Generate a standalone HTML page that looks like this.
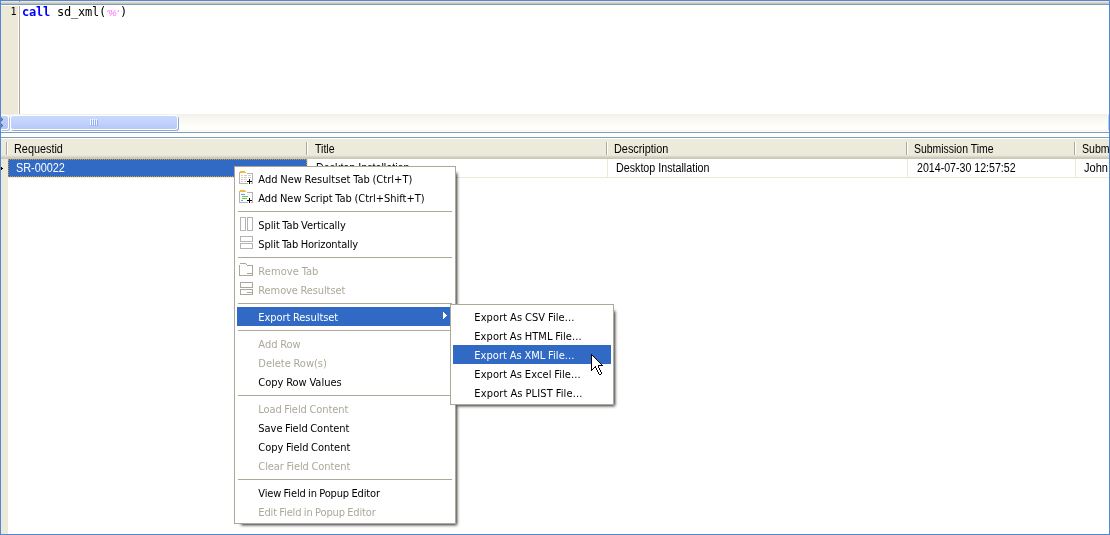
<!DOCTYPE html>
<html><head><meta charset="utf-8">
<style>
html,body{margin:0;padding:0;}
body{width:1110px;height:535px;overflow:hidden;background:#fff;position:relative;font-family:"Liberation Sans",sans-serif;}
.abs{position:absolute;}
#frame{left:0;top:0;width:1108px;height:533px;border:1px solid #4f89d6;pointer-events:none;z-index:50;}
#topbar{left:1px;top:1px;width:1108px;height:3px;background:linear-gradient(#efe7d5 0,#efe7d5 1px,#d8d4c9 1px,#d8d4c9 2px,#c4c3bd 2px);}
#topline{left:1px;top:4px;width:1108px;height:1px;background:#7f9db9;}
#gutter{left:1px;top:6px;width:17px;height:108px;background:#ece9d8;}
#gutline{left:19px;top:6px;width:1px;height:108px;background:#aca899;}
#lnum{left:1px;top:6px;width:15.5px;text-align:right;font:10px/12px "DejaVu Sans Mono","Liberation Mono",monospace;color:#000;}
#code{left:22px;top:5px;font:12px/15px "DejaVu Sans Mono","Liberation Mono",monospace;color:#000;white-space:pre;letter-spacing:-0.22px;}
#code b{color:#0000ff;font-weight:bold;}
#code i{color:#ff66ff;font:italic 9.5px "Liberation Sans",sans-serif;letter-spacing:0;display:inline-block;width:14px;text-align:center;position:relative;top:0;left:-0.5px;}
#sbar{left:1px;top:114px;width:1108px;height:17px;background:linear-gradient(#f1f0e9,#f8f7f2 30%,#fefefb 70%,#fefefb 94%,#eeede0);}
#sbtn{left:1px;top:115px;width:7px;height:13px;border:1px solid #fff;border-left:none;border-radius:0 3px 3px 0;background:linear-gradient(#c1d2fa,#b1c6f6);box-shadow:1px 1px 0 #a9bce6;}
#thumb{left:10px;top:115px;width:166px;height:13px;border:1px solid #fff;border-radius:3px;background:linear-gradient(#c9d8fc,#c2d2fb 50%,#b5c8f7);box-shadow:1px 1px 0 #8da6d6;}
.grip{top:119px;width:1px;height:6px;background:#f4f8ff;box-shadow:1px 1px 0 #8cb0f8;}
#l1{left:1px;top:132px;width:1108px;height:1px;background:#7f9db9;}
#l2{left:1px;top:137px;width:1108px;height:1px;background:#7f9db9;}
#hdr{left:1px;top:139px;width:1108px;height:20px;background:linear-gradient(#ebeadb 0,#ebeadb 16px,#e3e0d0 17px,#d6d2c2 18px,#cbc7b8 19px,#cbc7b8);}
.hsep{top:142px;width:1px;height:13px;background:#aca899;box-shadow:1px 0 0 #fff;}
.ht{top:142px;margin-left:-0.6px;font:12px/14px "Liberation Sans",sans-serif;color:#000;white-space:nowrap;transform-origin:0 0;transform:scaleX(0.88);}
#ind{left:1px;top:159px;width:7px;height:375px;background:#ece9d8;}
#sel{left:8px;top:159px;width:299px;height:18px;background:#316ac5;}
#foc{left:8px;top:159px;width:297px;height:16px;border:1px dotted #ce953a;}
.ct{top:161px;margin-left:-0.6px;font:12px/14px "Liberation Sans",sans-serif;color:#000;white-space:nowrap;transform-origin:0 0;transform:scaleX(0.88);}
.vl{top:159px;width:1px;height:19px;background:#ece9d8;}
#hl{left:8px;top:177px;width:1101px;height:1px;background:#ece9d8;}
.menu{background:#fff;border:1px solid #aca899;box-shadow:4px 4px 3px -3px rgba(0,0,0,.85);box-sizing:border-box;padding:2px;font:11px/19px "DejaVu Sans Condensed","Liberation Sans",sans-serif;color:#000;word-spacing:-0.5px;}
.mi{height:19px;padding-left:21.3px;white-space:nowrap;position:relative;}
.mi span{position:relative;top:1px;}
.mi.d{color:#aca899;}
.mi.h{background:#316ac5;color:#fff;}
.ms{height:8px;position:relative;}
.ms:after{content:"";position:absolute;left:1px;right:1px;top:4px;height:1px;background:#aca899;}
#m1{left:234px;top:166px;width:222px;height:358px;z-index:10;}
#m2{left:450px;top:304px;width:164px;height:101px;z-index:11;}
.ico{position:absolute;left:0;top:1px;}
#cur{left:591px;top:354px;z-index:30;}
</style></head><body><div id="wrap" style="position:absolute;left:0;top:0;width:1110px;height:535px;will-change:transform">
<div class="abs" id="topbar"></div><div class="abs" id="topline"></div>
<div class="abs" id="gutter"></div><div class="abs" id="gutline"></div>
<div class="abs" style="left:19px;top:1px;width:1px;height:1px;background:#8f98a3"></div><div class="abs" id="lnum">1</div>
<div class="abs" id="code"><b>call</b> sd_xml(<i>'%'</i>)</div>
<div class="abs" id="sbar"></div><div class="abs" id="sbtn"></div><div class="abs" id="thumb"></div><svg class="abs" style="left:0;top:117px" width="4" height="11" viewBox="0 0 4 11"><path fill="#4d6185" d="M0 0.500L1.200 0.500L3.200 2.500L1.200 4.500L0 4.500L1.600 2.500zM0 6.500L1.200 6.500L3.200 8.500L1.200 10.500L0 10.500L1.600 8.500z"/></svg>
<div class="abs grip" style="left:90px"></div><div class="abs grip" style="left:92px"></div><div class="abs grip" style="left:94px"></div><div class="abs grip" style="left:96px"></div>
<div class="abs" style="left:1107px;top:115px;width:1px;height:15px;background:#fff;box-shadow:1px 0 0 #b8cbf6"></div><div class="abs" id="l1"></div><div class="abs" id="l2"></div>
<div class="abs" id="hdr"></div>
<div class="abs hsep" style="left:6px"></div><div class="abs hsep" style="left:306px"></div><div class="abs hsep" style="left:606px"></div><div class="abs hsep" style="left:906px"></div><div class="abs hsep" style="left:1074px"></div>
<div class="abs ht" style="left:15px;transform:scaleX(.905)">Requestid</div><div class="abs ht" style="left:315.5px">Title</div><div class="abs ht" style="left:615px;transform:scaleX(.905)">Description</div><div class="abs ht" style="left:915px;transform:scaleX(.87)">Submission Time</div><div class="abs ht" style="left:1083px">Submitter</div>
<div class="abs" id="ind"></div>
<svg class="abs" style="left:0;top:165px" width="4" height="7" viewBox="0 0 4 7" shape-rendering="crispEdges"><path d="M0 1h1v5h-1zM1 2h1v3h-1zM2 3h1v1h-1z" fill="#000"/></svg>
<div class="abs" id="sel"></div><div class="abs" id="foc"></div>
<div class="abs vl" style="left:307px"></div><div class="abs vl" style="left:607px"></div><div class="abs vl" style="left:907px"></div><div class="abs vl" style="left:1075px"></div>
<div class="abs" id="hl"></div>
<div class="abs ct" style="left:17px;color:#fff;transform:scaleX(.905)">SR-00022</div><div class="abs ct" style="left:317px;transform:scaleX(.892)">Desktop Installation</div><div class="abs ct" style="left:617px;transform:scaleX(.892)">Desktop Installation</div><div class="abs ct" style="left:917.5px;transform:scaleX(.885)">2014-07-30 12:57:52</div><div class="abs ct" style="left:1085px;transform:scaleX(.92)">John</div>

<div class="abs menu" id="m1">
<div class="mi"><svg class="ico" width="16" height="16" viewBox="0 0 16 16" shape-rendering="crispEdges"><path fill="#f5b93d" d="M3 1h5v1h-5zM2 2h7v1h-7z"/><path fill="none" stroke="#b4b4b4" d="M2.500 3v10.500h13v-10h-6"/><path fill="#cfcfcf" d="M4 5h2v1h-2zM7 5h3v1h-3zM11 5h3v1h-3zM4 7h2v1h-2zM7 7h3v1h-3zM11 7h3v1h-3zM4 9h2v1h-2zM7 9h3v1h-3zM4 11h2v1h-2zM7 11h2v1h-2z"/><path fill="#fff" d="M9 10h6v3h-6zM11 8h3v7h-3z"/><path fill="#000" d="M10 11h5v1h-5zM12 9h1v5h-1z"/></svg><span style="letter-spacing:0.030px">Add New Resultset Tab (Ctrl+T)</span></div>
<div class="mi"><svg class="ico" width="16" height="16" viewBox="0 0 16 16" shape-rendering="crispEdges"><path fill="#f5b93d" d="M3 1h5v1h-5zM2 2h7v1h-7z"/><path fill="none" stroke="#b4b4b4" d="M2.500 3v10.500h13v-10h-6"/><path fill="#5aa0f5" d="M4 5h4v1h-4zM4 11h2v1h-2z"/><path fill="#5fcf45" d="M5 7h6v1h-6zM5 9h5v1h-5z"/><path fill="#fff" d="M9 10h6v3h-6zM11 8h3v7h-3z"/><path fill="#000" d="M10 11h5v1h-5zM12 9h1v5h-1z"/></svg><span style="letter-spacing:-0.023px">Add New Script Tab (Ctrl+Shift+T)</span></div>
<div class="ms"></div>
<div class="mi"><svg class="ico" width="16" height="16" viewBox="0 0 16 16" shape-rendering="crispEdges"><path fill="none" stroke="#b4b4b4" d="M3.500 1.500h5v13h-5zM10.500 1.500h5v13h-5z"/></svg><span style="letter-spacing:-0.099px">Split Tab Vertically</span></div>
<div class="mi"><svg class="ico" width="16" height="16" viewBox="0 0 16 16" shape-rendering="crispEdges"><path fill="none" stroke="#b4b4b4" d="M3.500 1.500h12v5h-12zM3.500 8.500h12v5h-12z"/></svg><span style="letter-spacing:-0.146px">Split Tab Horizontally</span></div>
<div class="ms"></div>
<div class="mi d"><svg class="ico" width="16" height="16" viewBox="0 0 16 16" shape-rendering="crispEdges"><path fill="none" stroke="#aca899" d="M2.500 13.500v-11M3 1.500h6M9 2.500h1M9.500 3.500h6.500M2 13.500h14M15.500 3.500v10M10 11.500h6"/></svg><span style="letter-spacing:0.085px">Remove Tab</span></div>
<div class="mi d"><svg class="ico" width="16" height="16" viewBox="0 0 16 16" shape-rendering="crispEdges"><path fill="none" stroke="#aca899" d="M3.500 1.500h12v5h-12zM3.500 8.500h12v5h-12zM10 11.500h6"/></svg><span style="letter-spacing:-0.091px">Remove Resultset</span></div>
<div class="ms"></div>
<div class="mi h"><span style="letter-spacing:-0.049px">Export Resultset</span><svg style="position:absolute;left:206px;top:5px" width="4" height="7" viewBox="0 0 4 7" shape-rendering="crispEdges"><path fill="#fff" d="M0 0h1v7h-1zM1 1h1v5h-1zM2 2h1v3h-1zM3 3h1v1h-1z"/></svg></div>
<div class="ms"></div>
<div class="mi d"><span style="letter-spacing:0.015px">Add Row</span></div>
<div class="mi d"><span style="letter-spacing:0.002px">Delete Row(s)</span></div>
<div class="mi"><span style="letter-spacing:0.021px">Copy Row Values</span></div>
<div class="ms"></div>
<div class="mi d"><span style="letter-spacing:-0.062px">Load Field Content</span></div>
<div class="mi"><span style="letter-spacing:-0.036px">Save Field Content</span></div>
<div class="mi"><span style="letter-spacing:-0.030px">Copy Field Content</span></div>
<div class="mi d"><span style="letter-spacing:-0.071px">Clear Field Content</span></div>
<div class="ms"></div>
<div class="mi"><span style="letter-spacing:-0.155px">View Field in Popup Editor</span></div>
<div class="mi d"><span style="letter-spacing:-0.152px">Edit Field in Popup Editor</span></div>
</div>
<div class="abs menu" id="m2">
<div class="mi"><span style="letter-spacing:0.101px">Export As CSV File...</span></div>
<div class="mi"><span style="letter-spacing:0.076px">Export As HTML File...</span></div>
<div class="mi h"><span style="letter-spacing:0.054px">Export As XML File...</span></div>
<div class="mi"><span style="letter-spacing:0.092px">Export As Excel File...</span></div>
<div class="mi"><span style="letter-spacing:0.151px">Export As PLIST File...</span></div>
</div>
<svg class="abs" id="cur" width="12" height="21" viewBox="0 0 12 21" shape-rendering="crispEdges"><path fill="#fff" d="M1 2h1v1h-1zM1 3h2v1h-2zM1 4h3v1h-3zM1 5h4v1h-4zM1 6h5v1h-5zM1 7h6v1h-6zM1 8h7v1h-7zM1 9h8v1h-8zM1 10h9v1h-9zM1 11h6v1h-6zM1 12h3v1h-3zM5 12h2v1h-2zM1 13h2v1h-2zM5 13h2v1h-2zM1 14h1v1h-1zM6 14h2v1h-2zM6 15h2v1h-2zM7 16h2v1h-2zM7 17h2v1h-2zM8 18h2v1h-2zM8 19h2v1h-2z"/><path fill="#000" d="M0 0h1v1h-1zM0 1h2v1h-2zM0 2h1v1h-1zM2 2h1v1h-1zM0 3h1v1h-1zM3 3h1v1h-1zM0 4h1v1h-1zM4 4h1v1h-1zM0 5h1v1h-1zM5 5h1v1h-1zM0 6h1v1h-1zM6 6h1v1h-1zM0 7h1v1h-1zM7 7h1v1h-1zM0 8h1v1h-1zM8 8h1v1h-1zM0 9h1v1h-1zM9 9h1v1h-1zM0 10h1v1h-1zM10 10h1v1h-1zM0 11h1v1h-1zM7 11h5v1h-5zM0 12h1v1h-1zM4 12h1v1h-1zM7 12h1v1h-1zM0 13h1v1h-1zM3 13h2v1h-2zM7 13h1v1h-1zM0 14h1v1h-1zM2 14h1v1h-1zM5 14h1v1h-1zM8 14h1v1h-1zM0 15h2v1h-2zM5 15h1v1h-1zM8 15h1v1h-1zM0 16h1v1h-1zM6 16h1v1h-1zM9 16h1v1h-1zM6 17h1v1h-1zM9 17h1v1h-1zM7 18h1v1h-1zM10 18h1v1h-1zM7 19h1v1h-1zM10 19h1v1h-1zM8 20h2v1h-2z"/></svg>
<div class="abs" id="frame"></div>
</div></body></html>
